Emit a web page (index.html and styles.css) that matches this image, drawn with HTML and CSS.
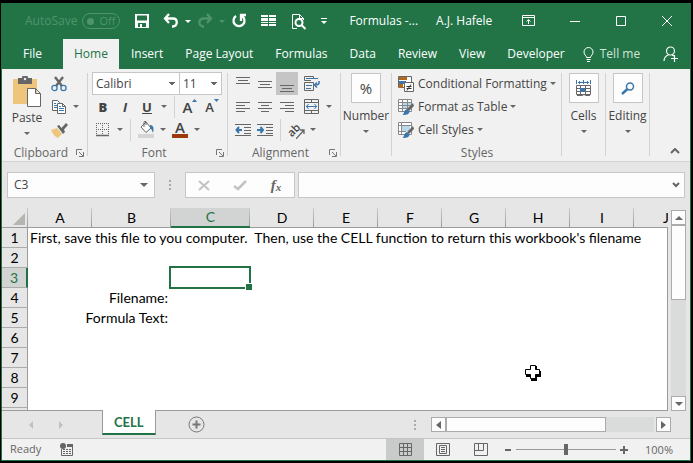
FILE: index.html
```html
<!DOCTYPE html>
<html lang="en">
<head>
<meta charset="utf-8">
<title>Formulas - Excel</title>
<link rel="stylesheet" href="styles.css">
</head>
<body>
<div class="window">
  <header class="titlebar">
    <label class="autosave">AutoSave <span class="pill"><input type="checkbox">Off</span></label>
    <div class="quick">
      <button class="qbtn" aria-label="Save"><svg width="16" height="16"><path fill="#fff" fill-rule="evenodd" d="M1 1h14v14H1zM3 2.500v5h10v-5zM4 10v4h2v-3h2v3h4v-4z"/></svg></button>
      <button class="qbtn" aria-label="Undo"><svg width="16" height="16" fill="none" stroke="#fff" stroke-width="2.300"><path d="M6 1 2 5.500 6 10M2 5.500h8c5 0 5 7 0 8H9"/></svg></button>
      <button class="qdrop" aria-label="Undo list"><i class="caret light"></i></button>
      <button class="qbtn" aria-label="Redo"><svg width="16" height="16" fill="none" stroke="#4f936d" stroke-width="2.300"><path d="m10 1 4 4.500L10 10M14 5.500H7c-6 0-6 7-1 8h1"/></svg></button>
      <button class="qdrop" aria-label="Redo list"><i class="caret dim"></i></button>
      <button class="qbtn" aria-label="Repeat"><svg width="16" height="16" fill="none" stroke="#fff" stroke-width="2.300"><path d="M5 3a5.500 5.500 0 1 0 6 0M15 2h-5v6"/></svg></button>
      <button class="qbtn wide" aria-label="Arrange windows"><svg width="16" height="16" fill="#fff"><path d="M0 2h7v2H0zM0 5h7v3H0zM0 9h7v1H0zM0 11h7v2H0zM8 2h7v2H8zM8 5h7v3H8zM8 9h7v1H8zM8 11h7v2H8z"/></svg></button>
      <button class="qbtn wide" aria-label="Print preview"><svg width="16" height="17" fill="none" stroke="#fff"><path d="M6 15.500H1.500V1.500h7l4 4V7M8.500 1.500v4h4"/><circle cx="8" cy="9.500" r="3.500" stroke-width="2"/><path d="m10.500 12 4 4" stroke-width="2"/></svg></button>
      <button class="qdrop last" aria-label="Customize toolbar"><svg width="6" height="7" fill="#fff"><path d="M0 0h6v1H0zM0 3h6L3 6z"/></svg></button>
    </div>
    <h1 class="doc">Formulas -...</h1>
    <span class="user">A.J. Hafele</span>
    <div class="sys">
      <button aria-label="Ribbon display options"><svg width="14" height="12" fill="none" stroke="#fff"><path d="M.500.500h12v10H.500zM0 2.500h13M6.500 9V5M4.500 6.500l2-2 2 2"/></svg></button>
      <button aria-label="Minimize"><svg width="12" height="12" stroke="#fff"><path d="M1 6.500h10"/></svg></button>
      <button aria-label="Maximize"><svg width="12" height="12" fill="none" stroke="#fff"><path d="M1.500 1.500h9v9h-9z"/></svg></button>
      <button aria-label="Close"><svg width="12" height="12" stroke="#fff"><path d="m1 1 10 10M11 1 1 11"/></svg></button>
    </div>
  </header>

  <nav class="tabs">
    <button class="file">File</button>
    <button class="active">Home</button>
    <button>Insert</button>
    <button>Page Layout</button>
    <button>Formulas</button>
    <button>Data</button>
    <button>Review</button>
    <button>View</button>
    <button>Developer</button>
    <button class="tell"><svg width="11" height="15" fill="none" stroke="#fff"><path d="M3.500 10.500c0-2-2.500-2.500-2.500-5.500a4.500 4.500 0 0 1 9 0c0 3-2.500 3.500-2.500 5.500zM3.500 12.500h4M4 14.500h3"/></svg>Tell me</button>
    <button class="share" aria-label="Share"><svg width="16" height="16" fill="none" stroke="#fff" stroke-width="1.200"><circle cx="7.500" cy="5" r="4"/><path d="M1 15c0-3 1.500-5 4.500-6.300M9 9l2 1M11.500 9v7M8 12.500h7"/></svg></button>
  </nav>

  <section class="ribbon">
    <div class="group clipboard">
      <div class="body split">
        <button class="paste"><svg width="30" height="31"><path fill="#eec57c" d="M1 3h24v25H1z"/><path fill="#666" d="M6 2h4a3 3 0 0 1 6 0h4v6H6z"/><circle cx="13" cy="3" r="1.200" fill="#eee"/><path fill="#fff" stroke="#666" d="M15.500 12.500h8l5 5v13h-13zM23.500 12.500v5h5"/></svg><span>Paste</span><i class="caret"></i></button>
        <div class="stack">
          <div class="line"><button class="tool" aria-label="Cut"><svg width="16" height="16" fill="none"><path d="m4 1 7 9M12 1l-7 9" stroke="#666" stroke-width="2.400"/><circle cx="3.500" cy="12" r="2.600" stroke="#3a76ab" stroke-width="1.300"/><circle cx="12.500" cy="12" r="2.600" stroke="#3a76ab" stroke-width="1.300"/></svg></button></div>
          <div class="line"><button class="tool" aria-label="Copy"><svg width="16" height="16" fill="#fff" stroke="#666"><path d="M1.500 1.500h5l2 2v8h-7z"/><path d="M6.500 4.500h5l3 3v7h-8zM11.500 4.500v3h3"/><path stroke="#3a76ab" d="M3 4.500h2M3 6.500h3M3 8.500h3M8 7.500h2M8 9.500h5M8 11.500h5"/></svg></button><button class="drop" aria-label="Copy options"><i class="caret"></i></button></div>
          <div class="line"><button class="tool" aria-label="Format Painter"><svg width="18" height="16"><path fill="#eec57c" d="m1 8 6-2 5 6-4 4C4 14 3 12 1 8z"/><path fill="#666" d="m7 4 2-1 2.500 3L16 1l2 2-4 4.500 1 2.500-2 2z"/></svg></button></div>
        </div>
      </div>
      <div class="caption"><span>Clipboard</span><button aria-label="Clipboard settings"><svg width="8" height="8"><use href="#launch"/></svg></button></div>
    </div>

    <div class="group font">
      <div class="body">
        <div class="line">
          <select class="face" aria-label="Font"><option>Calibri</option></select>
          <select class="size" aria-label="Font size"><option>11</option></select>
        </div>
        <div class="line">
          <button class="tool letter"><b>B</b></button><button class="tool letter"><em>I</em></button><button class="tool letter"><u>U</u></button><button class="drop" aria-label="Underline options"><i class="caret"></i></button>
          <span class="rule"></span>
          <button class="tool grow" aria-label="Increase font size"><span>A</span><svg width="5" height="3" fill="#3a76ab"><path d="M0 3h5L2.500 0z"/></svg></button><button class="tool grow less" aria-label="Decrease font size"><span>A</span><svg width="5" height="3" fill="#3a76ab"><path d="M0 0h5L2.500 3z"/></svg></button>
        </div>
        <div class="line">
          <button class="tool" aria-label="Borders"><svg width="14" height="14" fill="none" stroke="#666"><path stroke-dasharray="1 1" d="M0 .500h13M0 6.500h13M.500 0v12M6.500 0v12M12.500 0v12"/><path d="M0 12.500h13" stroke-width="1.500"/></svg></button><button class="drop" aria-label="Border options"><i class="caret"></i></button>
          <span class="rule"></span>
          <button class="tool" aria-label="Fill color"><svg width="17" height="17"><path fill="#d5d5d5" d="M0 13h16v4H0z"/><path fill="#fff" stroke="#666" d="m3 6 5-5 5 6-5 4.500z"/><path fill="none" stroke="#666" d="M6 6V1.500q0-2 2-1V4"/><path fill="#3a76ab" d="M12 4c4 0 4 4 3 8-1-2-1-4-3-5z"/></svg></button><button class="drop" aria-label="Fill options"><i class="caret"></i></button>
          <button class="tool ink" aria-label="Font color"><span>A</span></button><button class="drop" aria-label="Font color options"><i class="caret"></i></button>
        </div>
      </div>
      <div class="caption"><span>Font</span><button aria-label="Font settings"><svg width="8" height="8"><use href="#launch"/></svg></button></div>
    </div>

    <div class="group align">
      <div class="body">
        <div class="line">
          <button class="tool" aria-label="Top align"><svg width="14" height="18" stroke="#666"><path d="M0 2.500h14M2 5.500h10M0 8.500h14"/></svg></button><button class="tool" aria-label="Middle align"><svg width="14" height="18" stroke="#666"><path d="M0 6.500h14M2 9.500h10M0 12.500h14"/></svg></button><button class="tool on" aria-label="Bottom align"><svg width="14" height="18" stroke="#666"><path d="M0 10.500h14M2 13.500h10M0 16.500h14"/></svg></button>
          <button class="tool far" aria-label="Wrap text"><svg width="17" height="16" fill="none" stroke="#666"><path d="M7 4.500H.500v-4h9V2M.500 6.500h9v8h-9z"/><path stroke="#3a76ab" d="M2 2.500h12M2 9.500h6M2 12.500h5"/><path stroke="#3a76ab" stroke-width="1.500" d="M15 5v2q0 2-4 2M13 6.500 10.500 9l2.500 2.500"/></svg></button>
        </div>
        <div class="line">
          <button class="tool" aria-label="Align left"><svg width="14" height="12" stroke="#666"><path d="M0 1.500h14M0 4.500h9M0 7.500h14M0 10.500h9"/></svg></button><button class="tool" aria-label="Center"><svg width="14" height="12" stroke="#666"><path d="M0 1.500h14M3 4.500h8M0 7.500h14M3 10.500h8"/></svg></button><button class="tool" aria-label="Align right"><svg width="14" height="12" stroke="#666"><path d="M0 1.500h14M5 4.500h9M0 7.500h14M5 10.500h9"/></svg></button>
          <button class="tool far" aria-label="Merge and center"><svg width="16" height="16" fill="none" stroke="#666"><path d="M.500.500h14v14H.500zM.500 3.500h14M.500 11.500h14M7.500.500v3M7.500 11.500v3"/><path stroke="#3a76ab" d="M2 7.500h11M4.500 5 2.500 7.500l2 2.500M10.500 5l2 2.500-2 2.500"/></svg></button><button class="drop" aria-label="Merge options"><i class="caret"></i></button>
        </div>
        <div class="line">
          <button class="tool" aria-label="Decrease indent"><svg width="16" height="14" fill="none" stroke="#666"><path d="M0 1.500h16M9 4.500h7M9 7.500h7M9 10.500h7M0 12.500h16"/><path stroke="#3a76ab" stroke-width="2" d="M7 7H1.500M4 4 1.500 7 4 10"/></svg></button><button class="tool" aria-label="Increase indent"><svg width="16" height="14" fill="none" stroke="#666"><path d="M0 1.500h16M9 4.500h7M9 7.500h7M9 10.500h7M0 12.500h16"/><path stroke="#3a76ab" stroke-width="2" d="M0 7h6M3.500 4 6 7l-2.500 3"/></svg></button>
          <span class="rule"></span>
          <button class="tool orient" aria-label="Orientation"><span>ab</span><svg width="9" height="10" fill="none" stroke="#666" stroke-width="1.300"><path d="m0 10 8-9M4 1h4v4"/></svg></button><button class="drop" aria-label="Orientation options"><i class="caret"></i></button>
        </div>
      </div>
      <div class="caption"><span>Alignment</span><button aria-label="Alignment settings"><svg width="8" height="8"><use href="#launch"/></svg></button></div>
    </div>

    <div class="group number"><button class="big"><span class="tile pct">%</span><span>Number</span><i class="caret"></i></button></div>

    <div class="group styles">
      <div class="body">
        <button class="line item"><svg width="17" height="16"><path fill="#fff" stroke="#666" d="M.500.500h13v11H.500z"/><path fill="#b2691c" d="M1 1h8v3H1zM1 8h4v4H1z"/><path fill="#3a76ab" d="M1 5h7v3H1z"/><path fill="#fff" stroke="#666" d="M6.500 6.500h9v9h-9z"/><path stroke="#333" d="M8.500 10.500h5M8.500 12.500h5M13 8.500l-4 6"/></svg><span>Conditional Formatting</span><i class="caret"></i></button>
        <button class="line item"><svg width="17" height="16"><use href="#table-brush"/></svg><span>Format as Table</span><i class="caret"></i></button>
        <button class="line item"><svg width="17" height="16"><use href="#cell-brush"/></svg><span>Cell Styles</span><i class="caret"></i></button>
      </div>
      <div class="caption"><span>Styles</span></div>
    </div>

    <div class="group cells"><button class="big"><span class="tile"><svg width="16" height="17" fill="none" stroke="#666"><path stroke="#3a76ab" d="M.500 0v4M14.500 0v4M2 2.500h11M7.500 0v4M4 1 2.500 2.500 4 4M11 1l1.500 1.500L11 4"/><path fill="#fff" d="M.500 5.500h14v9H.500zM4.500 5.500v9M9.500 5.500v9M.500 8.500h14M.500 11.500h14M1 15.500h5l2-1 2 1h4"/><path fill="#3a76ab" stroke="none" d="M4 8h5v4H4z"/></svg></span><span>Cells</span><i class="caret"></i></button></div>
    <div class="group editing"><button class="big"><span class="tile"><svg width="14" height="13" fill="none" stroke="#3a76ab"><circle cx="9" cy="4.500" r="3.500" stroke-width="1.500"/><path stroke-width="2.400" d="m6.500 7-5.500 5"/></svg></span><span>Editing</span><i class="caret"></i></button></div>
    <button class="collapse" aria-label="Collapse ribbon"><svg width="10" height="6" fill="none" stroke="#666" stroke-width="2"><path d="m1 5 4-4 4 4"/></svg></button>
  </section>

  <section class="formula">
    <div class="namebox"><input value="C3" aria-label="Name box"><button aria-label="Names"><i class="caret"></i></button></div>
    <span class="dots"></span>
    <div class="actions">
      <button aria-label="Cancel"><svg width="12" height="11" stroke="#c3c3c3" stroke-width="2"><path d="m1 1 10 9M11 1 1 10"/></svg></button>
      <button aria-label="Enter"><svg width="14" height="11" fill="none" stroke="#c3c3c3" stroke-width="2.500"><path d="m1 6 4 3 8-8"/></svg></button>
      <button class="fx" aria-label="Insert function">f<small>x</small></button>
    </div>
    <div class="entry"><input aria-label="Formula"><button aria-label="Expand formula bar"><svg width="8" height="6" fill="none" stroke="#666" stroke-width="2"><path d="m1 1 3 3 3-3"/></svg></button></div>
  </section>

  <main class="sheet">
    <div class="view">
      <table>
        <colgroup><col class="c-head"><col class="c-std"><col class="c-wide"><col class="c-wide"><col class="c-std"><col class="c-std"><col class="c-std"><col class="c-std"><col class="c-std"><col class="c-std"><col class="c-std"></colgroup>
        <thead><tr><th class="corner"><svg width="12" height="12" fill="#b5b5b1"><path d="M12 0v12H0z"/></svg></th><th>A</th><th>B</th><th class="sel">C</th><th>D</th><th>E</th><th>F</th><th>G</th><th>H</th><th>I</th><th>J</th></tr></thead>
        <tbody>
          <tr><th>1</th><td class="text" colspan="10">First, save this file to you computer.  Then, use the CELL function to return this workbook's filename</td></tr>
          <tr><th>2</th><td colspan="10"></td></tr>
          <tr><th class="sel">3</th><td></td><td></td><td class="picked"></td><td colspan="7"></td></tr>
          <tr><th>4</th><td class="right" colspan="2">Filename:</td><td colspan="8"></td></tr>
          <tr><th>5</th><td class="right" colspan="2">Formula Text:</td><td colspan="8"></td></tr>
          <tr><th>6</th><td colspan="10"></td></tr>
          <tr><th>7</th><td colspan="10"></td></tr>
          <tr><th>8</th><td colspan="10"></td></tr>
          <tr><th>9</th><td colspan="10"></td></tr>
          <tr><th></th><td colspan="10"></td></tr>
        </tbody>
      </table>
      <svg class="cursor" width="16" height="16"><path fill="#000" d="M6 1h6v5h4v6h-4v4H6v-4H1V6h5z"/><path fill="#fff" stroke="#000" d="M5.500.500h5v4h4v5h-4v4h-5v-4h-5v-5h5z"/></svg>
    </div>
    <div class="vbar">
      <button class="end" aria-label="Scroll up"><i class="caret up"></i></button>
      <div class="track"><div class="thumb"></div></div>
      <button class="end" aria-label="Scroll down"><i class="caret"></i></button>
    </div>
  </main>

  <footer class="sheets">
    <button class="step" aria-label="Previous sheet"><svg width="4" height="8" fill="#c0c0c0"><path d="M4 0v8L0 4z"/></svg></button>
    <button class="step" aria-label="Next sheet"><svg width="4" height="8" fill="#c0c0c0"><path d="M0 0v8l4-4z"/></svg></button>
    <button class="sheettab">CELL</button>
    <button class="add" aria-label="New sheet"><svg width="17" height="17" fill="none" stroke="#777"><circle cx="8.500" cy="8.500" r="7.500"/><path stroke-width="2" d="M4.500 8.500h8M8.500 4.500v8"/></svg></button>
    <span class="dots"></span>
    <div class="hbar">
      <button class="end" aria-label="Scroll left"><svg width="5" height="8" fill="#666"><path d="M5 0v8L0 4z"/></svg></button>
      <div class="track"><div class="thumb"></div></div>
      <button class="end" aria-label="Scroll right"><svg width="5" height="8" fill="#666"><path d="M0 0v8l5-4z"/></svg></button>
    </div>
  </footer>

  <footer class="status">
    <span class="ready">Ready</span>
    <button class="macro" aria-label="Record macro"><svg width="14" height="13" fill="none" stroke="#666"><path stroke-width="3" d="M7 2.500h6"/><path d="M1.500 6v6.500h11V3M3 6.500h2M6 6.500h2M9 6.500h2M3 8.500h2M6 8.500h2M9 8.500h2M3 10.500h2M6 10.500h2M9 10.500h2"/><circle cx="3" cy="3" r="3" fill="#666" stroke="none"/></svg></button>
    <div class="modes">
      <button class="on" aria-label="Normal view"><svg width="13" height="13" fill="none" stroke="#666"><path d="M.500.500h12v12H.500zM4.500 0v13M8.500 0v13M0 4.500h13M0 8.500h13"/></svg></button>
      <button aria-label="Page layout view"><svg width="14" height="13" fill="none" stroke="#666"><path d="M.500.500h13v12H.500zM3.500 2.500h7v8h-7zM5 4.500h4M5 6.500h4M5 8.500h4"/></svg></button>
      <button aria-label="Page break view"><svg width="14" height="13" fill="none" stroke="#666"><path d="M.500.500h13v12H.500zM4.500.500v7M9.500.500v7M.500 7.500h9"/></svg></button>
    </div>
    <div class="zoom">
      <button aria-label="Zoom out"><svg width="8" height="8" stroke="#666" stroke-width="2"><path d="M1 4h6"/></svg></button>
      <input type="range" min="0" max="100" value="50" aria-label="Zoom">
      <button aria-label="Zoom in"><svg width="8" height="8" stroke="#666" stroke-width="2"><path d="M0 4h8M4 0v8"/></svg></button>
    </div>
    <button class="percent">100%</button>
  </footer>
</div>

<svg class="defs" width="0" height="0">
  <symbol id="launch" viewBox="0 0 8 8"><path fill="none" stroke="#777" d="M.500 6V.500H6M3 3l4 4M7.500 3v4.500H3"/></symbol>
  <symbol id="brush" viewBox="0 0 17 16"><path fill="#666" d="m15 4 1 3-5 5-2-2z"/><path fill="#3a76ab" d="m9 10 2.500 2c0 3-2 4-7 4 2-1 1-5 4.500-6z"/></symbol>
  <symbol id="table-brush" viewBox="0 0 17 16"><path fill="#fff" stroke="#888" d="M.500.500h13v12H.500z"/><path fill="#b9dbe9" d="M5 4h8v6H5z"/><path fill="none" stroke="#888" d="M4.500 0v13M9.500 0v13M0 3.500h14M0 6.500h14M0 9.500h14"/><use href="#brush"/></symbol>
  <symbol id="cell-brush" viewBox="0 0 17 16"><path fill="#fff" stroke="#888" d="M.500.500h13v12H.500z"/><path fill="#b9dbe9" d="M4 4h8v5H4z"/><path fill="none" stroke="#888" d="M3.500 0v13M0 3.500h14M0 9.500h8"/><use href="#brush"/></symbol>
</svg>
</body>
</html>
```
FILE: styles.css
```css
* { box-sizing: border-box; }

body {
  margin: 0;
  padding: 3px 2px 2px 1px;
  background: #000;
  color: #444;
  font: 12px/16px "Open Sans", "Noto Sans", sans-serif;
  white-space: nowrap;
}

button, input, select { font: inherit; color: inherit; }

button {
  display: flex;
  align-items: center;
  justify-content: center;
  flex: none;
  padding: 0;
  border: 0;
  background: none;
}

svg { display: block; flex: none; }
.defs { position: absolute; }

.window {
  border: solid #217346;
  border-width: 0 1px 1px;
  background: #e6e6e6;
}

.caret {
  border: solid transparent;
  border-width: 3px 3px 0;
  border-top-color: #666;
}
.caret.light { border-top-color: #fff; }
.caret.dim { border-top-color: #4f936d; }

/* Title bar */
.titlebar {
  display: flex;
  align-items: center;
  height: 36px;
  padding-left: 23px;
  background: #227447;
  color: #fff;
}
.autosave { display: flex; align-items: center; gap: 5px; color: #4f936d; }
.pill {
  display: flex;
  align-items: center;
  gap: 5px;
  height: 16px;
  padding: 0 4px;
  border: 1px solid #4f936d;
  border-radius: 8px;
  font-size: 11px;
}
.pill input {
  appearance: none;
  width: 7px;
  height: 7px;
  margin: 0;
  border-radius: 50%;
  background: #4f936d;
}
.quick { display: flex; margin-left: 10px; }
.qbtn { width: 24px; }
.qbtn + .qbtn { margin-left: 5px; }
.qbtn.wide { width: 25px; }
.qdrop { width: 10px; }
.qdrop.last { margin-left: 8px; }
.doc { margin: 0 0 0 20px; font-size: 12px; font-weight: 400; }
.user { margin-left: 18px; }
.sys { display: flex; margin-left: auto; }
.sys button { width: 46px; }

/* Ribbon tabs */
.tabs { display: flex; height: 30px; background: #227447; color: #fff; }
.tabs button { padding: 0 11px; }
.tabs .file { width: 61px; }
.tabs .active { margin-right: 1px; background: #f1f1f1; color: #217346; }
.tabs .tell { gap: 6px; padding: 0 7px; color: #d3e3da; }
.tabs .share { margin-left: auto; }

/* Ribbon */
.ribbon {
  display: flex;
  height: 93px;
  padding-top: 3px;
  border-bottom: 1px solid #d2d2d2;
  background: #f1f1f1;
}
.group {
  display: flex;
  flex: none;
  flex-direction: column;
  margin: 1px 0 5px;
  border-right: 1px solid #d2d2d2;
}
.clipboard { width: 86px; }
.font { width: 140px; }
.align { width: 113px; }
.number { width: 51px; }
.styles { width: 170px; }
.cells, .editing { width: 44px; }

.body { margin-top: -1px; padding: 0 4px; }
.split { display: flex; }
.line { display: flex; align-items: center; height: 23px; }
.caption { display: flex; align-items: center; margin: 4px 3px 0 4px; color: #666; }
.caption span { flex: 1; text-align: center; }

.tool { width: 22px; height: 23px; }
.tool.on { background: #c5c5c5; }
.tool.far { margin-left: 3px; }
.drop { width: 12px; height: 22px; }
.rule { width: 1px; height: 22px; margin: 0 4px; background: #d2d2d2; }

.paste { flex-direction: column; justify-content: flex-start; width: 42px; padding-top: 4px; }
.paste span { margin: 3px 0 6px; }

.face, .size {
  appearance: none;
  height: 23px;
  padding: 0 3px;
  border: 1px solid #c6c6c6;
  border-radius: 0;
  background-color: #fff;
  background-image: linear-gradient(to bottom right, #666 50%, transparent 51%), linear-gradient(to bottom left, #666 50%, transparent 51%);
  background-position: right 4px center, right 7px center;
  background-size: 3px 3px;
  background-repeat: no-repeat;
}
.face { width: 88px; }
.size { width: 43px; margin-left: -1px; }

.letter { font-size: 13px; font-weight: 700; }
.grow span { font-size: 15px; font-weight: 600; }
.grow svg { align-self: flex-start; margin-top: 4px; }
.grow.less span { font-size: 13px; }
.ink span {
  width: 16px;
  height: 17px;
  border-bottom: 4px solid #9c3a0c;
  font-size: 15px;
  font-weight: 600;
  line-height: 13px;
}
.orient span { transform: rotate(-45deg); font-size: 11px; font-weight: 600; }
.orient svg { margin: 8px 0 0 -5px; }

.big { flex-direction: column; width: 100%; }
.tile {
  display: flex;
  align-items: center;
  justify-content: center;
  width: 30px;
  height: 30px;
  margin-bottom: 5px;
  border: 1px solid #c6c6c6;
  background: #fdfdfd;
}
.pct { font-size: 15px; }
.big .caret { margin-top: 6px; }

.item { gap: 3px; padding: 0 2px; }
.collapse { width: 20px; height: 16px; margin: auto 5px 2px auto; }

/* Formula bar */
.formula { display: flex; align-items: center; padding: 10px 5px; }
.namebox, .actions, .entry {
  display: flex;
  height: 26px;
  border: 1px solid #c6c6c6;
  background: #fdfdfd;
}
.namebox { width: 148px; }
.formula input {
  flex: 1;
  min-width: 0;
  padding: 0 6px;
  border: 0;
  background: none;
}
.namebox button { width: 20px; }
.namebox .caret { border-width: 4px 4px 0; }
.dots { width: 2px; height: 10px; background: repeating-linear-gradient(#aaa 0 2px, transparent 2px 4px); }
.formula .dots { margin: 0 14px; }
.actions { width: 110px; margin-right: 3px; }
.actions button { flex: 1; }
.fx { color: #666; font: italic 700 15px "Liberation Serif", serif; }
.fx small { margin-top: 3px; font-size: 11px; }
.entry { flex: 1; }
.entry button { width: 16px; }

/* Worksheet */
.sheet { display: flex; height: 203px; }
.view {
  position: relative;
  flex: 1;
  min-width: 0;
  overflow: hidden;
  border-bottom: 1px solid #9b9b9b;
}
.view::after {
  content: "";
  position: absolute;
  inset: 20px 0 0 auto;
  width: 1px;
  background: #9b9b9b;
}
table { width: 696px; table-layout: fixed; border-spacing: 0; color: #000; font: 14px/18px Lato, "Open Sans", sans-serif; }
.c-head { width: 26px; }
.c-std { width: 64px; }
.c-wide { width: 79px; }
th, td { height: 20px; padding: 0; font-weight: 400; white-space: pre; }
td { background: #fff; }
thead th {
  border-bottom: 1px solid #9b9b9b;
  background: linear-gradient(#ccc, #999) no-repeat right / 1px 100% #e6e6e6;
}
thead .sel {
  border-bottom: 2px solid #217346;
  background-color: #d2d4d3;
  color: #217346;
}
.corner svg { margin: 2px 3px 0 auto; }
tbody th { border-right: 1px solid #9b9b9b; border-bottom: 1px solid #ababab; }
tbody .sel { border-right: 2px solid #217346; background: #d2d4d3; color: #217346; }
.text { padding-left: 2px; }
.right { padding-right: 3px; text-align: right; }
.picked { position: relative; }
.picked::before {
  content: "";
  position: absolute;
  inset: -2px -1px -1px -2px;
  border: 2px solid #217346;
}
.picked::after {
  content: "";
  position: absolute;
  right: -2px;
  bottom: -2px;
  width: 6px;
  height: 6px;
  border: solid #fff;
  border-width: 1px 0 0 1px;
  background: #217346;
}
.cursor { position: absolute; left: 523px; top: 157px; }

.vbar { display: flex; flex-direction: column; width: 15px; margin: 2px 4px 0 3px; }
.end { width: 15px; height: 15px; border: 1px solid #ababab; background: #fdfdfd; }
.end .caret { border-width: 4px 4px 0; }
.end .caret.up { border-width: 0 4px 4px; border-bottom-color: #666; }
.track { flex: 1; background: #dadcdb; }
.thumb { border: 1px solid #ababab; background: #fdfdfd; }
.vbar .thumb { height: 75px; }

/* Sheet tabs */
.sheets {
  display: flex;
  align-items: center;
  height: 28px;
  padding: 0 19px 0 14px;
  border-bottom: 1px solid #c6c6c6;
}
.step { width: 30px; }
.sheettab {
  position: relative;
  align-self: flex-start;
  height: 25px;
  margin: -1px 0 0 26px;
  padding: 0 11px;
  border: solid #9b9b9b;
  border-width: 0 1px;
  border-bottom: 2px solid #217346;
  background: #fff;
  color: #217346;
  font: 700 13px Lato, sans-serif;
}
.add { margin-left: 32px; }
.sheets .dots { margin-left: auto; }
.hbar { display: flex; width: 240px; margin-left: 15px; }
.hbar .track { margin-right: 2px; }
.hbar .thumb { width: 160px; height: 15px; }

/* Status bar */
.status { display: flex; height: 21px; padding: 0 17px 0 8px; background: #f1f1f1; color: #666; }
.ready { margin-top: 2px; font-size: 11px; }
.macro { margin-left: 19px; }
.modes { display: flex; margin-left: auto; }
.modes button { width: 38px; }
.modes .on { background: #c9cbca; }
.zoom { display: flex; margin-left: 4px; }
.zoom input {
  appearance: none;
  width: 100px;
  height: 20px;
  margin: 0 4px;
  background: linear-gradient(#999, #999) no-repeat center / 100% 1px;
}
.zoom input::-webkit-slider-thumb { appearance: none; width: 4px; height: 11px; background: #666; }
.percent { margin-left: 17px; font-size: 11px; }
```
